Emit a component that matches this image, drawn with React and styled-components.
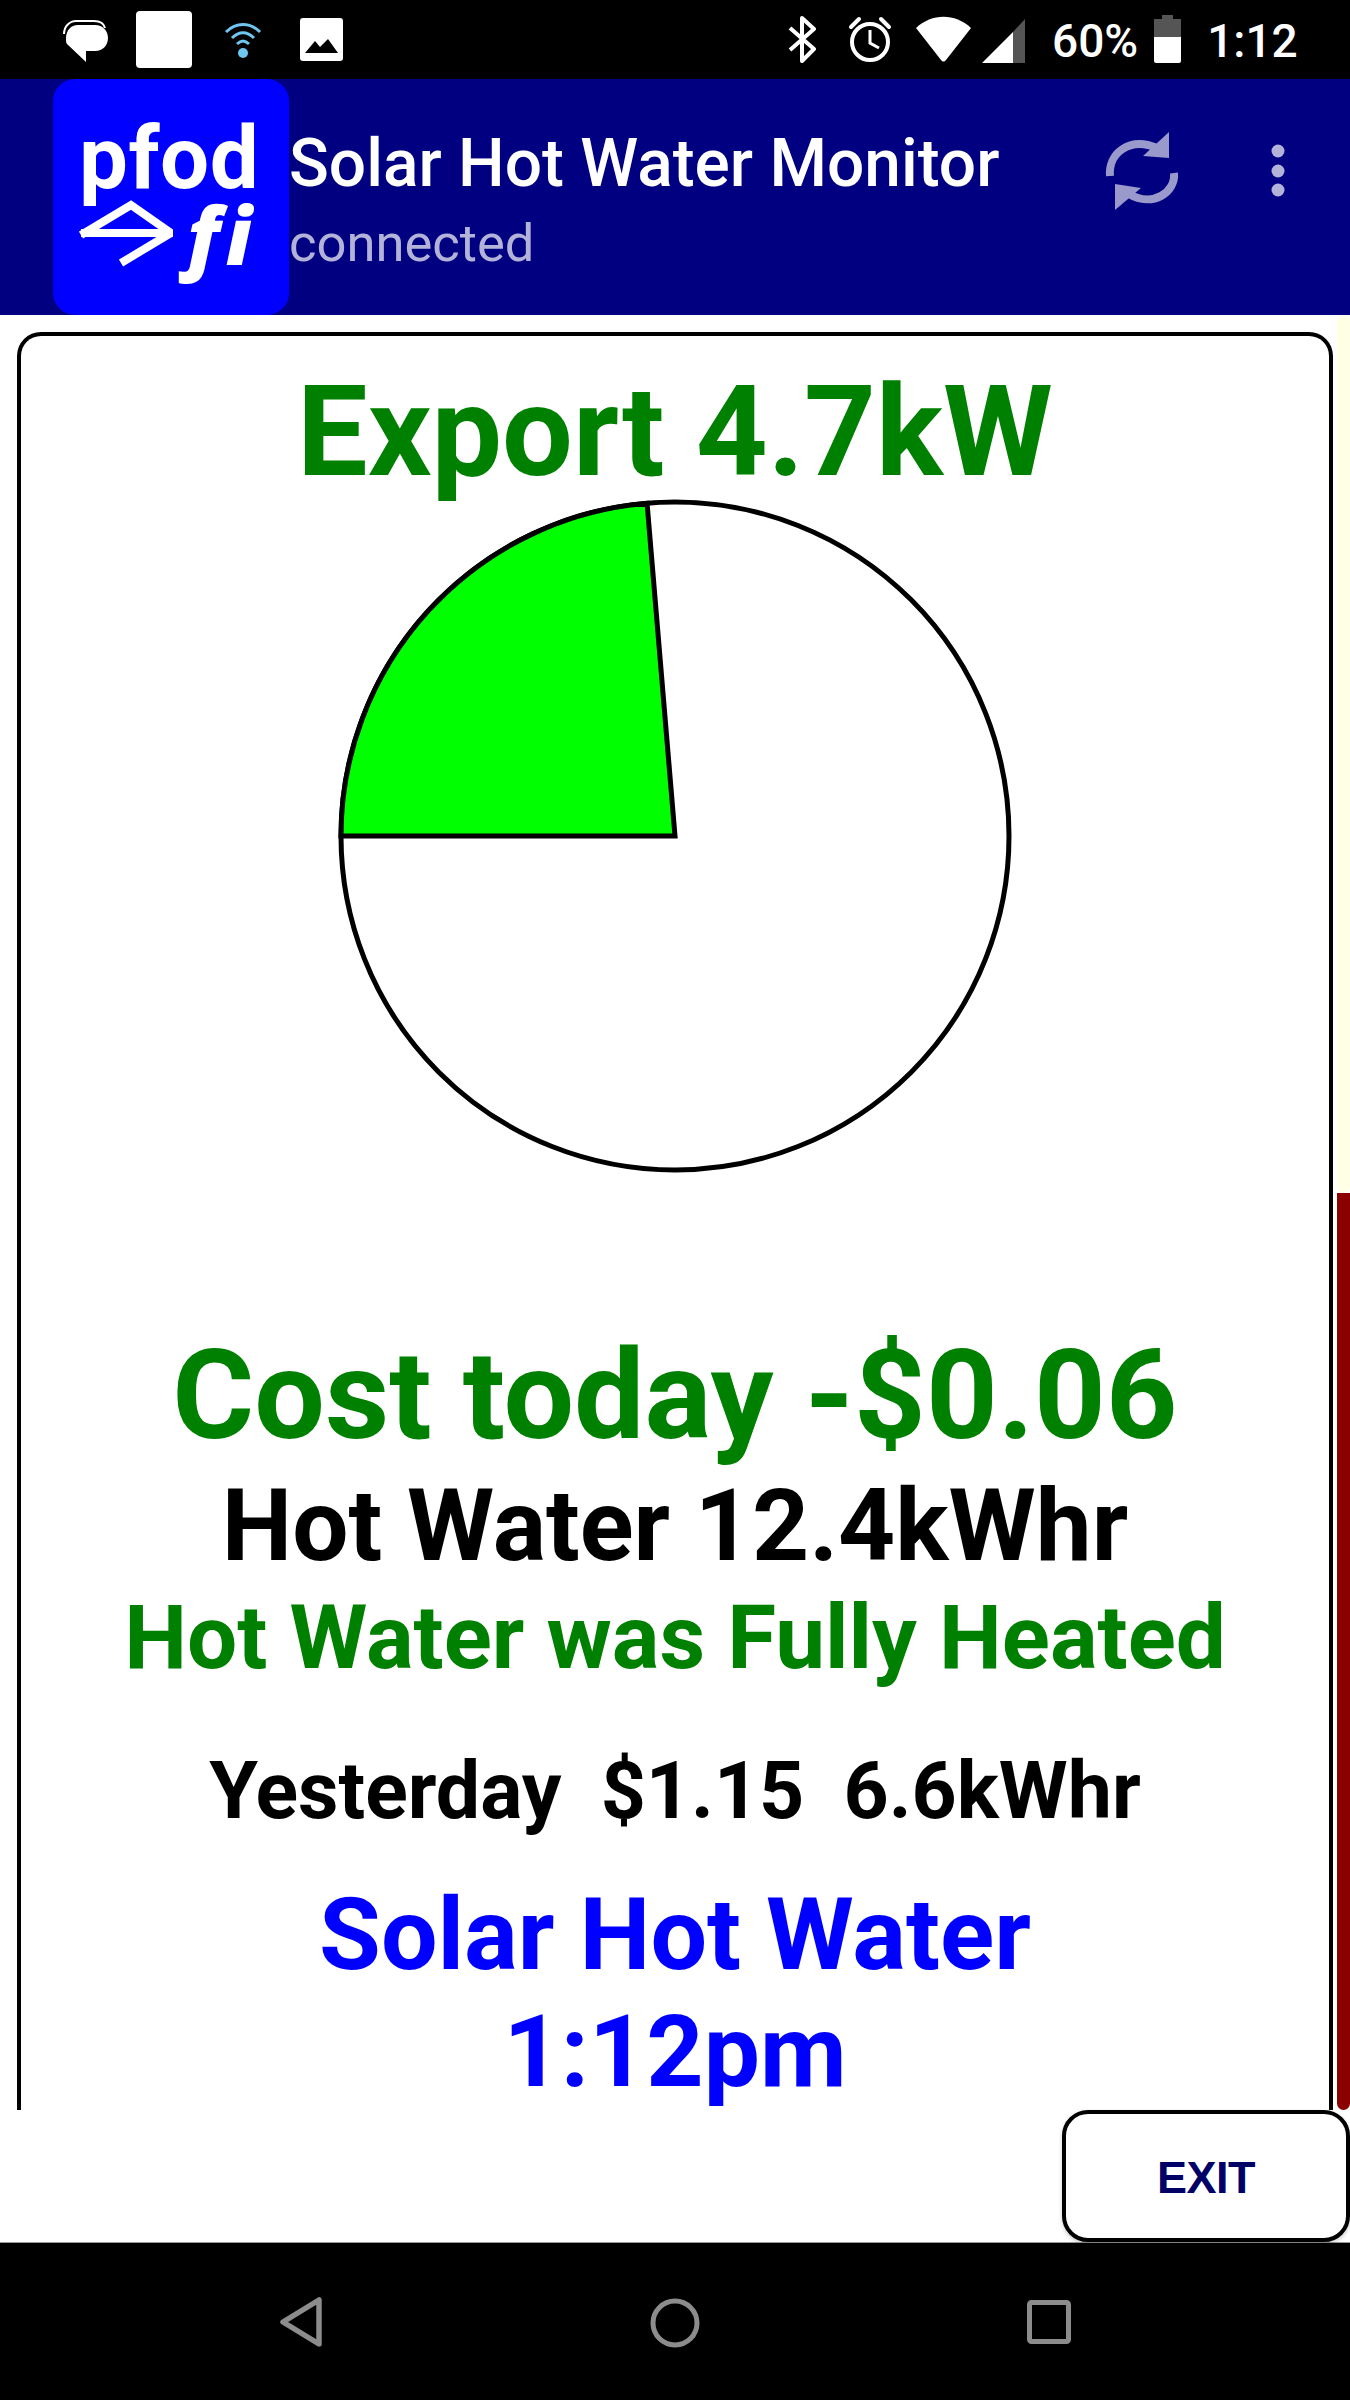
import styled, { createGlobalStyle } from 'styled-components';

const GlobalStyle = createGlobalStyle`
  html, body { margin: 0; padding: 0; background: #000; }
  body { font-family: Roboto, "Liberation Sans", sans-serif; }
`;

const Phone = styled.div`
  width: 1350px;
  height: 2400px;
  display: flex;
  flex-direction: column;
  overflow: hidden;
  background: #fff;
`;

const StatusBar = styled.div`
  height: 79px;
  background: #000;
  display: flex;
  align-items: flex-start;
  color: #fff;
  flex: none;
`;

const Glyph = styled.svg`
  display: block;
  flex: none;
  margin-left: ${p => p.$left}px;
  margin-top: ${p => p.$top}px;
`;

const StatusText = styled.span`
  font-size: 46px;
  line-height: 46px;
  font-weight: 500;
  margin-left: ${p => p.$left}px;
  margin-top: 18px;
  flex: none;
`;

const AppBar = styled.header`
  height: 236px;
  flex: none;
  background: #000080;
  display: flex;
  padding-left: 53px;
  position: relative;
`;

const Logo = styled.div`
  width: 236px;
  height: 236px;
  background: #0000ff;
  border-radius: 22px;
  flex: none;
  color: #fff;
  padding: 43px 0 0 26px;
  box-sizing: border-box;
`;

const LogoWord = styled.div`
  font-size: 87px;
  line-height: 72px;
  font-weight: 700;
  letter-spacing: 0.5px;
`;

const LogoRow = styled.div`
  display: flex;
  align-items: flex-start;
  margin-top: 6px;
`;

const LogoFi = styled.span`
  font-family: "Open Sans", Roboto, sans-serif;
  font-size: 80px;
  line-height: 68px;
  font-style: italic;
  font-weight: 800;
  letter-spacing: 6px;
  margin-left: 14px;
`;

const TitleBlock = styled.div`
  padding-top: 47px;
  flex: none;
`;

const Title = styled.div`
  font-size: 65.8px;
  line-height: 75px;
  font-weight: 500;
  color: #fff;
`;

const Subtitle = styled.div`
  font-size: 52.5px;
  line-height: 62px;
  color: #b3b3d9;
  margin-top: 11px;
`;

const Body = styled.main`
  flex: 1;
  display: flex;
  min-height: 0;
  background: #fff;
`;

const CardArea = styled.div`
  flex: 1;
  padding: 17px 4px 0 17px;
  display: flex;
  min-width: 0;
`;

const Card = styled.section`
  flex: 1;
  border: 4px solid #000;
  border-bottom: 0;
  border-radius: 24px 24px 0 0;
  overflow: hidden;
  text-align: center;
  padding-top: 37px;
  box-sizing: border-box;
`;

const Line = styled.div`
  font-size: ${p => p.$size}px;
  line-height: ${p => p.$lh}px;
  font-weight: 700;
  color: ${p => p.$color};
  margin-top: ${p => p.$gap || 0}px;
  white-space: pre;
`;

const Pie = styled.svg`
  display: block;
  margin: 3px auto 0;
`;

const Scroll = styled.div`
  width: 13px;
  flex: none;
  display: flex;
  flex-direction: column;
`;

const ScrollThumb = styled.div`
  height: 878px;
  flex: none;
  background: #ffffe6;
  border-radius: 7px;
`;

const ScrollTrack = styled.div`
  flex: 1;
  background: #8b0000;
  border-radius: 0 0 7px 7px;
`;

const Footer = styled.div`
  height: 132px;
  flex: none;
  display: flex;
  justify-content: flex-end;
  background: #fff;
  border-bottom: 1px solid #999;
  box-sizing: content-box;
`;

const ExitButton = styled.button`
  width: 288px;
  height: 132px;
  box-sizing: border-box;
  background: #fff;
  border: 4px solid #000;
  border-radius: 26px;
  color: #000066;
  font-family: "Liberation Sans", Arial, sans-serif;
  font-weight: 700;
  font-size: 45px;
  letter-spacing: -0.5px;
  padding: 4px 0 0 0;
  box-shadow: 0 2px 4px rgba(0, 0, 0, 0.2);
`;

const NavBar = styled.nav`
  height: 157px;
  flex: none;
  background: #000;
  display: flex;
  align-items: flex-start;
`;

const R = 334;
const cx = 340;
const cy = 340;
const tipX = cx + R * Math.cos((-94.8 * Math.PI) / 180);
const tipY = cy + R * Math.sin((-94.8 * Math.PI) / 180);

export default function App() {
  return (
    <Phone>
      <GlobalStyle />
      <StatusBar>
        <Glyph $left={62} $top={18} width="48" height="46" viewBox="0 0 48 46">
          <path d="M2 16C2 8 8 3 14 3H32C38 3 42 6 43 10" fill="none" stroke="#fff" strokeWidth="2" />
          <path d="M4 21C4 12 9 7 16 7H33C41 7 46 13 46 20C46 27 41 33 33 33H24V44L5 26C4 25 4 23 4 21Z" fill="#fff" />
        </Glyph>
        <Glyph $left={26} $top={11} width="56" height="57" viewBox="0 0 56 57">
          <rect width="56" height="57" rx="4" fill="#fff" />
        </Glyph>
        <Glyph $left={32} $top={21} width="38" height="38" viewBox="0 0 38 38">
          <g fill="none" stroke="#6ec6f1" strokeWidth="3">
            <path d="M2 11C12 1 26 1 36 11" />
            <path d="M8 17C15 10 23 10 30 17" />
            <path d="M13 23C17 19 21 19 25 23" />
          </g>
          <circle cx="19" cy="32" r="5" fill="#6ec6f1" />
        </Glyph>
        <Glyph $left={38} $top={18} width="43" height="43" viewBox="0 0 43 43">
          <rect width="43" height="43" rx="3" fill="#fff" />
          <path d="M5 35L15 23L20 29L28 21L38 35Z" fill="#000" />
        </Glyph>
        <Glyph $left={445} $top={16} width="30" height="47" viewBox="0 0 30 47">
          <path d="M2 12L26 33L14 45V2L26 13L2 34" fill="none" stroke="#fff" strokeWidth="4" strokeLinejoin="round" />
        </Glyph>
        <Glyph $left={30} $top={16} width="44" height="47" viewBox="0 0 44 47">
          <circle cx="22" cy="26" r="18" fill="none" stroke="#fff" strokeWidth="4" />
          <path d="M22 14V27L31 32" fill="none" stroke="#fff" strokeWidth="3" />
          <path d="M3 11L11 3M41 11L33 3" stroke="#fff" strokeWidth="4" strokeLinecap="round" />
        </Glyph>
        <Glyph $left={23} $top={16} width="57" height="46" viewBox="0 0 57 46">
          <path d="M1 12C17 -3 40 -3 56 12L31 44C29 46 28 46 26 44Z" fill="#fff" />
        </Glyph>
        <Glyph $left={9} $top={18} width="44" height="45" viewBox="0 0 44 45">
          <path d="M1 45L32 14V45Z" fill="#fff" />
          <path d="M32 14L44 1V45H32Z" fill="#555" />
        </Glyph>
        <StatusText $left={27}>60%</StatusText>
        <Glyph $left={16} $top={15} width="27" height="48" viewBox="0 0 27 48">
          <path d="M8 0H19V4H27V22H0V4H8Z" fill="#555" />
          <path d="M0 22H27V46C27 47 26 48 25 48H2C1 48 0 47 0 46Z" fill="#fff" />
        </Glyph>
        <StatusText $left={26}>1:12</StatusText>
      </StatusBar>
      <AppBar>
        <Logo>
          <LogoWord>pfod</LogoWord>
          <LogoRow>
            <svg width="94" height="70" viewBox="0 0 94 70">
              <path d="M2 35L52 5L92 33H2M92 33L42 63" fill="none" stroke="#fff" strokeWidth="8" />
            </svg>
            <LogoFi>fi</LogoFi>
          </LogoRow>
        </Logo>
        <TitleBlock>
          <Title>Solar Hot Water Monitor</Title>
          <Subtitle>connected</Subtitle>
        </TitleBlock>
        <Glyph $left={106} $top={51} width="74" height="82" viewBox="0 0 74 82">
          <g fill="none" stroke="#9999cc" strokeWidth="8">
            <path d="M5 46C3 24 24 6 52 18" />
            <path d="M69 43C71 62 48 78 24 64" />
          </g>
          <path d="M64 2V28L38 26Z" fill="#9999cc" />
          <path d="M10 80V54L36 58Z" fill="#9999cc" />
        </Glyph>
        <Glyph $left={92} $top={65} width="14" height="60" viewBox="0 0 14 60">
          <circle cx="7" cy="7" r="6.5" fill="#b3b3d9" />
          <circle cx="7" cy="27" r="6.5" fill="#b3b3d9" />
          <circle cx="7" cy="46" r="6.5" fill="#b3b3d9" />
        </Glyph>
      </AppBar>
      <Body>
        <CardArea>
          <Card>
            <Line $size={125.5} $lh={120} $color="#008000">Export 4.7kW</Line>
            <Pie width="680" height="680" viewBox="0 0 680 680">
              <circle cx={cx} cy={cy} r={R} fill="#fff" stroke="#000" strokeWidth="5" />
              <path
                d={`M${cx} ${cy}H${cx - R}A${R} ${R} 0 0 1 ${tipX} ${tipY}Z`}
                fill="#00ff00"
                stroke="#000"
                strokeWidth="5"
              />
            </Pie>
            <Line $size={125.2} $lh={130} $color="#008000" $gap={155}>Cost today -$0.06</Line>
            <Line $size={99.7} $lh={110} $color="#000" $gap={10}>Hot Water 12.4kWhr</Line>
            <Line $size={89} $lh={100} $color="#008000" $gap={7}>Hot Water was Fully Heated</Line>
            <Line $size={78.8} $lh={92} $color="#000" $gap={57}>{'Yesterday  $1.15  6.6kWhr'}</Line>
            <Line $size={100.4} $lh={118} $color="#0000ff" $gap={39}>Solar Hot Water</Line>
            <Line $size={100} $lh={110} $color="#0000ff" $gap={3}>1:12pm</Line>
          </Card>
        </CardArea>
        <Scroll>
          <ScrollThumb />
          <ScrollTrack />
        </Scroll>
      </Body>
      <Footer>
        <ExitButton>EXIT</ExitButton>
      </Footer>
      <NavBar>
        <Glyph $left={279} $top={53} width="46" height="52" viewBox="0 0 46 52">
          <path d="M4 26L40 4V48Z" fill="none" stroke="#8c8c8c" strokeWidth="5.5" strokeLinejoin="round" />
        </Glyph>
        <Glyph $left={325} $top={55} width="50" height="50" viewBox="0 0 50 50">
          <circle cx="25" cy="25" r="22" fill="none" stroke="#8c8c8c" strokeWidth="5" />
        </Glyph>
        <Glyph $left={327} $top={57} width="44" height="44" viewBox="0 0 44 44">
          <rect x="2.5" y="2.5" width="39" height="39" rx="2" fill="none" stroke="#8c8c8c" strokeWidth="5" />
        </Glyph>
      </NavBar>
    </Phone>
  );
}
